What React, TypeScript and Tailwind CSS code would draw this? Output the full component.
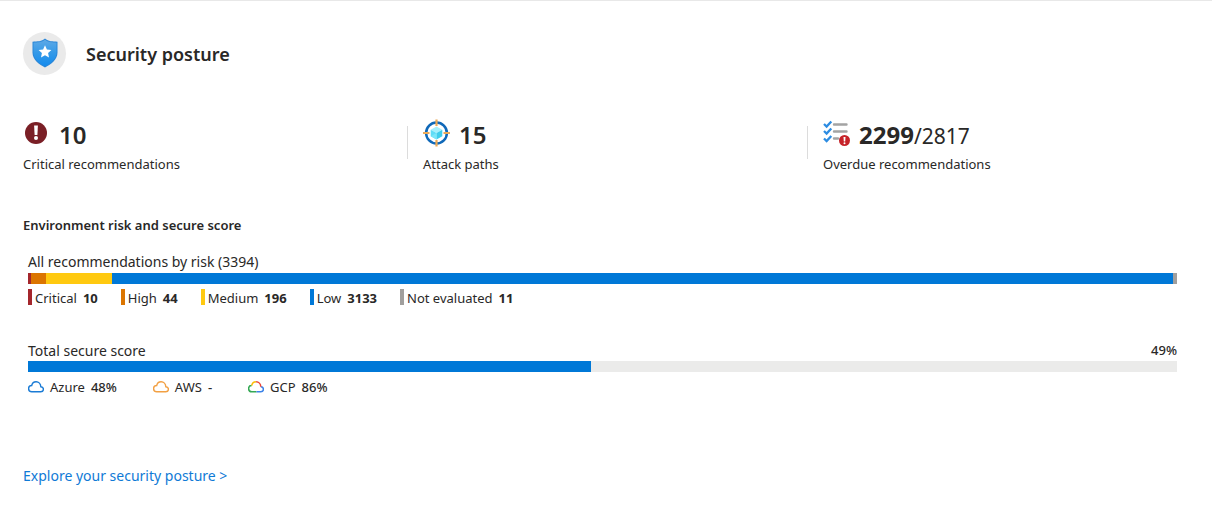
import type { ReactNode } from "react";

const risks = [
  { label: "Critical", count: 10, color: "bg-[#a4262c]", width: "w-[3px]" },
  { label: "High", count: 44, color: "bg-[#db7500]", width: "w-[15px]" },
  { label: "Medium", count: 196, color: "bg-[#ffc910]", width: "w-[66px]" },
  { label: "Low", count: 3133, color: "bg-[#0078d7]", width: "flex-1" },
  { label: "Not evaluated", count: 11, color: "bg-[#a19f9d]", width: "w-1" },
];

function ShieldIcon() {
  return (
    <svg width="26" height="30" viewBox="0 0 26 30" className="mb-0.5" aria-hidden="true">
      <defs>
        <linearGradient id="shield" x1="0" y1="0" x2="0" y2="1">
          <stop offset="0" stopColor="#5ea9e6" />
          <stop offset="0.5" stopColor="#3399e8" />
          <stop offset="1" stopColor="#138bee" />
        </linearGradient>
      </defs>
      <path d="M13 0.5C16.5 3.7 20.5 3.3 25.5 3.7V14.5C25.5 22 18.5 26.5 13 29.5C7.5 26.5 0.5 22 0.5 14.5V3.7C5.5 3.3 9.5 3.7 13 0.5Z" fill="#2b87d8" />
      <path d="M13 1.8C17 4.7 20.5 4.4 24.5 4.7V14.5C24.5 21 18 25.5 13 28.3C8 25.5 1.5 21 1.5 14.5V4.7C5.5 4.4 9 4.7 13 1.8Z" fill="url(#shield)" />
      <path d="M13 7.3L14.9 11.5L19.4 12L16.1 15.1L17 19.5L13 17.3L9 19.5L9.9 15.1L6.6 12L11.1 11.5Z" fill="#fff" />
    </svg>
  );
}

function CriticalIcon() {
  return (
    <svg width="28" height="28" viewBox="0 0 28 28" aria-hidden="true">
      <circle cx="13" cy="14" r="11" fill="#7a1f26" />
      <path d="M11.1 6.5H14.9L14.4 16H11.6Z" fill="#fff" />
      <circle cx="13" cy="19" r="2" fill="#fff" />
    </svg>
  );
}

function TargetIcon() {
  return (
    <svg width="28" height="28" viewBox="0 0 28 28" aria-hidden="true">
      <circle cx="13.5" cy="14" r="10.4" fill="none" stroke="#0f68b8" strokeWidth="2.5" />
      <path d="M13.5 7.5L19.3 10.7L13.5 14L7.7 10.7Z" fill="#a4effc" />
      <path d="M7.7 10.7L13.5 14V20.6L7.7 17.3Z" fill="#5fdcf7" />
      <path d="M19.3 10.7L13.5 14V20.6L19.3 17.3Z" fill="#3fcdec" />
      <path d="M7.7 17.3L13.5 14L13.5 20.6Z" fill="#7ae6fa" />
      <path d="M13.5 0.5V7M13.5 21V27.5M0 14H6.5M20.5 14H27" stroke="#eaa958" strokeWidth="2.2" />
    </svg>
  );
}

function OverdueIcon() {
  return (
    <svg width="28" height="28" viewBox="0 0 28 28" aria-hidden="true">
      <path d="M11 5.5H23.5M11 12.5H23.5M11 19.5H15" stroke="#a3a3a3" strokeWidth="2.4" strokeLinecap="round" />
      <path d="M1 5L3.6 7.5L8.3 2.5M1 12L3.6 14.5L8.3 9.5M1 19.5L3.6 22L8.3 17" fill="none" stroke="#2c8ce2" strokeWidth="2.3" />
      <circle cx="21.5" cy="21.5" r="5.5" fill="#c62329" />
      <path d="M20.5 18H22.5L22.2 22.4H20.8Z" fill="#fff" />
      <circle cx="21.5" cy="24.3" r="1" fill="#fff" />
    </svg>
  );
}

function CloudIcon({ stroke }: { stroke: string }) {
  return (
    <svg width="16" height="12" viewBox="0 0 16 12" aria-hidden="true">
      <path
        d="M3.7 10.8H12.8C14.3 10.8 15.4 9.8 15.4 8.3C15.4 6.9 14.3 5.8 12.8 5.7C12.7 2.9 10.7 0.8 8.1 0.8C5.9 0.8 4.200 2.200 3.700 4.500C1.900 4.500 0.600 5.800 0.600 7.600C0.600 9.500 1.900 10.800 3.700 10.800Z"
        fill="none"
        stroke={stroke}
        strokeWidth="1.4"
      />
    </svg>
  );
}

function GcpCloudIcon() {
  return (
    <svg width="16" height="12" viewBox="0 0 16 12" fill="none" strokeWidth="1.5" aria-hidden="true">
      <path d="M3.7 4.5C1.9 4.5 0.6 5.8 0.6 7.6C0.6 9.5 1.9 10.8 3.7 10.8H8.5" stroke="#34a853" />
      <path d="M8.5 10.8H12.8C14.3 10.8 15.4 9.8 15.4 8.3C15.4 6.9 14.3 5.8 12.8 5.7" stroke="#3b82e8" />
      <path d="M3.7 4.5C4.2 2.2 5.9 0.8 8.1 0.8" stroke="#fbbc05" />
      <path d="M8.1 0.8C10.7 0.8 12.7 2.9 12.8 5.7" stroke="#ea4335" />
    </svg>
  );
}

function Stat({ icon, label, divided, children }: { icon: ReactNode; label: string; divided?: boolean; children: ReactNode }) {
  return (
    <div className="flex">
      {divided && <div className="mt-2 mr-[15px] -ml-4 h-[33px] w-px bg-[#dcdcdc]" />}
      <div>
        <div className="flex h-9 items-start gap-2">
          <span className="pt-px">{icon}</span>
          <div className="text-2xl leading-[34px] font-semibold">{children}</div>
        </div>
        <div className="text-[13px] leading-5">{label}</div>
      </div>
    </div>
  );
}

function Cloud({ icon, name, score }: { icon: ReactNode; name: string; score: string }) {
  return (
    <li className="flex items-center gap-1.5">
      {icon}
      <span>{name}</span>
      <span className="font-medium">{score}</span>
    </li>
  );
}

export default function App() {
  return (
    <main className="border-t border-[#e8e8e8] bg-white px-[23px] pt-[31px] pb-6 font-['Noto_Sans',sans-serif] text-[#292827]">
      <header className="flex items-center gap-5">
        <div className="flex size-[43px] items-center justify-center rounded-full bg-[#eaeaea]">
          <ShieldIcon />
        </div>
        <h1 className="text-lg leading-6 font-semibold">Security posture</h1>
      </header>

      <section className="mt-[43px] grid grid-cols-3 gap-[34px]">
        <Stat icon={<CriticalIcon />} label="Critical recommendations">10</Stat>
        <Stat icon={<TargetIcon />} label="Attack paths" divided>15</Stat>
        <Stat icon={<OverdueIcon />} label="Overdue recommendations" divided>
          <span className="font-bold">2299</span>
          <span className="text-[21px] font-normal">/2817</span>
        </Stat>
      </section>

      <h2 className="mt-[41px] text-[13px] leading-5 font-semibold">Environment risk and secure score</h2>

      <section className="mt-4 mr-3 ml-[5px]">
        <h3 className="text-sm leading-[22px]">All recommendations by risk (3394)</h3>
        <div className="flex h-[11px]">
          {risks.map((r) => (
            <div key={r.label} className={`${r.color} ${r.width}`} />
          ))}
        </div>
        <ul className="mt-1 flex gap-[23px] text-[13px] leading-5">
          {risks.map((r) => (
            <li key={r.label} className="flex items-start gap-[3px]">
              <span className={`mt-px h-4 w-1 ${r.color}`} />
              <span className="mr-[3px]">{r.label}</span>
              <b className="font-bold">{r.count}</b>
            </li>
          ))}
        </ul>
      </section>

      <section className="mt-8 mr-3 ml-[5px]">
        <div className="flex h-[21px] justify-between">
          <h3 className="text-sm leading-[22px]">Total secure score</h3>
          <span className="text-[13px] leading-5 font-medium">49%</span>
        </div>
        <div className="h-[11px] bg-[#ebebea]">
          <div className="h-full w-[49%] bg-[#0078d7]" />
        </div>
        <ul className="mt-[5px] flex gap-9 text-[13px] leading-5">
          <Cloud icon={<CloudIcon stroke="#1a7bd5" />} name="Azure" score="48%" />
          <Cloud icon={<CloudIcon stroke="#f2a043" />} name="AWS" score="-" />
          <Cloud icon={<GcpCloudIcon />} name="GCP" score="86%" />
        </ul>
      </section>

      <a href="#posture" className="mt-[68px] inline-block text-sm leading-[22px] text-[#0f7ad6]">Explore your security posture &gt;</a>
    </main>
  );
}
